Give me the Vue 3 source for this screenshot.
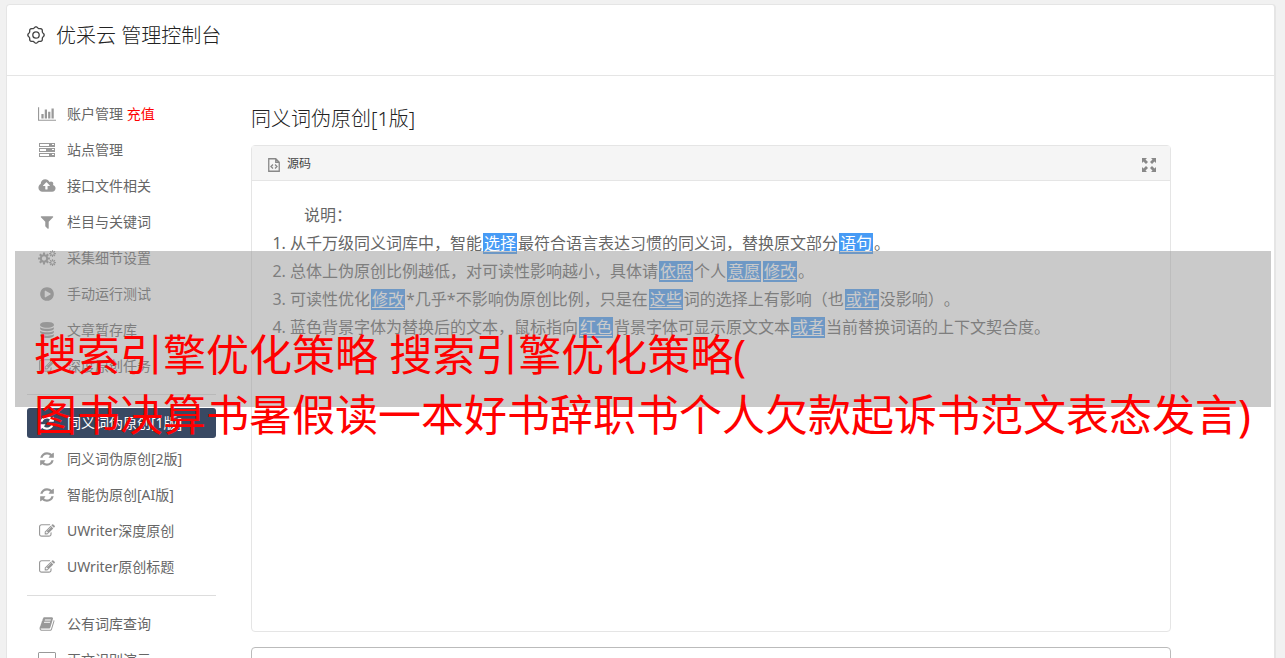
<script setup>
import { ref } from 'vue'

const icons = {
  chart: {
    box: '0 0 2048 1792',
    d: 'M640 896v512h-256v-512h256zm384-512v1024h-256v-1024h256zm1024 1152v128h-2048v-1536h128v1408h1920zm-640-896v768h-256v-768h256zm384-384v1152h-256v-1152h256z',
  },
  server: {
    box: '0 0 18 16',
    d: 'M1 1h16v4H1zM2 2v2h9V2zm12 0v1h2V2zM1 6h16v4H1zm1 1v2h6V7zm12 0v1h2V7zM1 11h16v4H1zm1 1v2h9v-2zm12 0v1h2v-1z',
  },
  upload: {
    box: '-64 0 1920 1792',
    d: 'M1216 864q0-14-9-23l-352-352q-9-9-23-9t-23 9l-351 351q-10 12-10 24 0 14 9 23t23 9h224v352q0 13 9.500 22.500t22.500 9.500h192q13 0 22.500-9.500t9.500-22.500v-352h224q13 0 22.500-9.500t9.500-22.500zm640 288q0 159-112.500 271.500t-271.500 112.500h-1088q-185 0-316.500-131.500t-131.500-316.500q0-130 70-240t188-165q-2-30-2-43 0-212 150-362t362-150q156 0 285.500 87t188.500 231q71-62 166-62 106 0 181 75t75 181q0 76-41 138 130 31 213.500 135.500t83.500 238.500z',
  },
  filter: {
    box: '0 0 1792 1792',
    d: 'M1595 295q17 41-14 70l-493 493v742q0 42-39 59-13 5-25 5-27 0-45-19l-256-256q-19-19-19-45v-486l-493-493q-31-29-14-70 17-39 59-39h1280q42 0 59 39z',
  },
  cogs: { box: '0 0 18 16', gears: [[6, 8.5, 4.2, 6], [14.5, 3.6, 2.2, 3.5], [14.5, 12.6, 2.2, 3.5]] },
  play: {
    box: '0 0 1792 1792',
    d: 'M896 128q209 0 385.500 103t279.500 279.500 103 385.500-103 385.500-279.500 279.500-385.500 103-385.500-103-279.500-279.500-103-385.500 103-385.500 279.500-279.500 385.500-103zm384 823q32-18 32-55t-32-55l-544-320q-31-19-64-1-32 19-32 56v640q0 37 32 56 16 8 32 8 17 0 32-9z',
  },
  database: {
    box: '0 0 1792 1792',
    d: 'M896 768q237 0 443-43t325-127v170q0 69-103 128t-280 93.500-385 34.500-385-34.500-280-93.500-103-128v-170q119 84 325 127t443 43zm0 768q237 0 443-43t325-127v170q0 69-103 128t-280 93.500-385 34.500-385-34.500-280-93.500-103-128v-170q119 84 325 127t443 43zm0-384q237 0 443-43t325-127v170q0 69-103 128t-280 93.500-385 34.500-385-34.500-280-93.500-103-128v-170q119 84 325 127t443 43zm0-1152q208 0 385 34.500t280 93.500 103 128v128q0 69-103 128t-280 93.500-385 34.500-385-34.500-280-93.500-103-128v-128q0-69 103-128t280-93.500 385-34.500z',
  },
  edit: {
    box: '0 0 1792 1792',
    d: 'M888 1184l116-116-152-152-116 116v56h96v96h56zm440-720q-16-16-33 1l-350 350q-17 17-1 33t33-1l350-350q17-17 1-33zm80 594v190q0 119-84.500 203.500t-203.500 84.500h-832q-119 0-203.500-84.500t-84.500-203.500v-832q0-119 84.500-203.500t203.500-84.500h832q63 0 117 25 15 7 18 23 3 17-9 29l-49 49q-14 14-32 8-23-6-45-6h-832q-66 0-113 47t-47 113v832q0 66 47 113t113 47h832q66 0 113-47t47-113v-126q0-13 9-22l64-64q15-15 35-7t20 29zm-96-738l288 288-672 672h-288v-288zm444 132l-92 92-288-288 92-92q28-28 68-28t68 28l152 152q28 28 28 68t-28 68z',
  },
  refresh: {
    box: '0 0 1792 1792',
    d: 'M1639 1056q0 5-1 7-64 268-268 434.500t-478 166.500q-146 0-282.500-55t-243.500-157l-129 129q-19 19-45 19t-45-19-19-45v-448q0-26 19-45t45-19h448q26 0 45 19t19 45-19 45l-137 137q71 66 161 102t187 36q134 0 250-65t186-179q11-17 53-117 8-23 30-23h192q13 0 22.500 9.500t9.500 22.500zm25-800v448q0 26-19 45t-45 19h-448q-26 0-45-19t-19-45 19-45l138-138q-148-137-349-137-134 0-250 65t-186 179q-11 17-53 117-8 23-30 23h-199q-13 0-22.500-9.500t-9.500-22.500v-7q65-268 270-434.500t480-166.500q146 0 284 55.500t245 156.500l130-129q19-19 45-19t45 19 19 45z',
  },
  book: {
    box: '0 0 1792 1792',
    d: 'M1703 478q40 57 18 129l-275 906q-19 64-76.500 107.500t-122.500 43.500h-923q-77 0-148.500-53.500t-99.500-131.500q-24-67-2-127 0-4 3-27t4-37q1-8-3-21.500t-3-19.500q2-11 8-21t16.500-23.500 16.500-23.500q23-38 45-91.500t30-91.500q3-10 .5-30t-.5-28q3-11 17-28t17-23q21-36 42-92t25-90q1-9-2.500-32t.5-28q4-13 22-30.500t22-22.500q19-26 42.500-84.500t27.500-96.500q1-8-3-25.500t-2-26.500q2-8 9-18t18-23 17-21q8-12 16.500-30.500t15-35 16-36 19.500-32 26.500-23.500 36-11.500 47.500 5.500l-1 3q38-9 51-9h761q74 0 114 56t18 130l-274 906q-36 119-71.500 153.500t-128.500 34.500h-869q-27 0-38 15-11 16-1 43 24 70 144 70h923q29 0 56-15.500t35-41.500l300-987q7-22 5-57 38 15 59 43zm-1064 2q-4 13 2 22.500t20 9.500h608q13 0 25.500-9.500t16.500-22.500l21-64q4-13-2-22.500t-20-9.500h-608q-13 0-25.500 9.500t-16.500 22.500zm-83 256q-4 13 2 22.500t20 9.500h608q13 0 25.500-9.500t16.500-22.500l21-64q4-13-2-22.500t-20-9.500h-608q-13 0-25.500 9.500t-16.500 22.500z',
  },
  screen: {
    box: '0 0 18 16',
    d: 'M1.500 0h15A1.500 1.500 0 0 1 18 1.500v10a1.500 1.500 0 0 1-1.500 1.500H11v2h2v1H5v-1h2v-2H1.500A1.500 1.500 0 0 1 0 11.500v-10A1.500 1.500 0 0 1 1.500 0zM1 1v10h16V1z',
  },
}

// Outline of a toothed wheel with a round hole
function gear([cx, cy, inner, outer]) {
  const teeth = 8
  const pts = []
  for (let i = 0; i < teeth; i++) {
    const a = (i * 2 * Math.PI) / teeth
    for (const [off, r] of [[-0.26, inner], [-0.17, outer], [0.17, outer], [0.26, inner]]) {
      pts.push(`${(cx + r * Math.cos(a + off)).toFixed(2)} ${(cy + r * Math.sin(a + off)).toFixed(2)}`)
    }
  }
  const h = outer * 0.36
  return `M${pts.join('L')}zM${cx - h} ${cy}a${h} ${h} 0 1 0 ${2 * h} 0a${h} ${h} 0 1 0 ${-2 * h} 0z`
}

const iconPath = (name) => icons[name].d || icons[name].gears.map(gear).join('')

// Wavy contour of the settings wheel in the title bar
const wheel = (() => {
  const pts = []
  for (let i = 0; i < 96; i++) {
    const a = (i * 2 * Math.PI) / 96
    const r = 7.6 + 0.6 * Math.cos(8 * a)
    pts.push(`${(9 + r * Math.cos(a)).toFixed(2)} ${(9 + r * Math.sin(a)).toFixed(2)}`)
  }
  return `M${pts.join('L')}z`
})()

const groups = [
  [
    { icon: 'chart', label: '账户管理', extra: '充值' },
    { icon: 'server', label: '站点管理' },
    { icon: 'upload', label: '接口文件相关' },
    { icon: 'filter', label: '栏目与关键词' },
    { icon: 'cogs', label: '采集细节设置' },
    { icon: 'play', label: '手动运行测试' },
    { icon: 'database', label: '文章暂存库' },
    { icon: 'edit', label: '深度原创任务' },
  ],
  [
    { icon: 'refresh', label: '同义词伪原创[1版]', active: true },
    { icon: 'refresh', label: '同义词伪原创[2版]' },
    { icon: 'refresh', label: '智能伪原创[AI版]' },
    { icon: 'edit', label: 'UWriter深度原创' },
    { icon: 'edit', label: 'UWriter原创标题' },
  ],
  [
    { icon: 'book', label: '公有词库查询' },
    { icon: 'screen', label: '正文识别演示' },
  ],
]

// Odd entries of each line are the replaced words
const lines = [
  ['从千万级同义词库中，智能', '选择', '最符合语言表达习惯的同义词，替换原文部分', '语句', '。'],
  ['总体上伪原创比例越低，对可读性影响越小，具体请', '依照', '个人', '意愿', '', '修改', '。'],
  ['可读性优化', '修改', '*几乎*不影响伪原创比例，只是在', '这些', '词的选择上有影响（也', '或许', '没影响）。'],
  ['蓝色背景字体为替换后的文本，鼠标指向', '红色', '背景字体可显示原文文本', '或者', '当前替换词语的上下文契合度。'],
]

const result = ref('')
</script>

<template>
  <div class="page">
    <div class="card">
      <header class="top">
        <svg class="wheel" viewBox="0 0 18 18" aria-hidden="true">
          <path :d="wheel" />
          <circle cx="9" cy="9" r="3.200" />
        </svg>
        <h1>优采云 管理控制台</h1>
      </header>
      <div class="body">
        <nav class="side">
          <ul v-for="(group, g) in groups" :key="g">
            <li v-for="item in group" :key="item.label">
              <a href="#" :class="{ active: item.active }">
                <svg class="icon" :viewBox="icons[item.icon].box" aria-hidden="true">
                  <path :d="iconPath(item.icon)" fill-rule="evenodd" />
                </svg>
                <span>{{ item.label }} <em v-if="item.extra">{{ item.extra }}</em></span>
              </a>
            </li>
          </ul>
        </nav>
        <main class="main">
          <h2>同义词伪原创[1版]</h2>
          <section class="editor">
            <div class="toolbar">
              <button type="button" class="source">
                <svg viewBox="0 0 12 14" aria-hidden="true">
                  <path d="M.75.75h7l3.500 3.500v9H.75z M7.750.750v3.500h3.500" />
                  <path d="M5 6.500L3 8.500l2 2M7 6.500l2 2-2 2" />
                </svg>
                源码
              </button>
              <button type="button" class="expand" aria-label="全屏">
                <svg viewBox="0 0 14 14" aria-hidden="true">
                  <path d="M0 0h5L3.500 1.500l2.500 2.500-2 2L1.500 3.500 0 5zM14 0v5l-1.500-1.500L10 6 8 4l2.500-2.500L9 0zM0 14V9l1.500 1.500L4 8l2 2-2.500 2.500L5 14zM14 14H9l1.500-1.500L8 10l2-2 2.500 2.500L14 9z" />
                </svg>
              </button>
            </div>
            <div class="content">
              <p>说明：</p>
              <ol>
                <li v-for="(line, i) in lines" :key="i">
                  <template v-for="(part, j) in line" :key="j"><a v-if="j % 2" href="#">{{ part }}</a><template v-else>{{ part }}</template></template>
                </li>
              </ol>
            </div>
          </section>
          <textarea v-model="result" aria-label="结果"></textarea>
        </main>
      </div>
    </div>
    <div class="banner">
      <p>搜索引擎优化策略 搜索引擎优化策略(</p>
      <p>图书决算书暑假读一本好书辞职书个人欠款起诉书范文表态发言)</p>
    </div>
  </div>
</template>

<style>
body {
  margin: 0;
  background: #f1f1f1;
}
</style>

<style scoped>
* {
  box-sizing: border-box;
}
.page {
  position: relative;
  height: 100vh;
  overflow: hidden;
  padding: 4px 9px 0 6px;
  color: #666;
  font-family: "Noto Sans", "Noto Sans CJK SC", sans-serif;
  font-size: 14px;
  text-spacing-trim: space-all;
}
h1,
h2,
p,
ul,
ol {
  margin: 0;
  padding: 0;
}
.card {
  background: #fff;
  border: 1px solid #e5e5e5;
  border-right-width: 2px;
  border-radius: 4px 4px 0 0;
}
.top {
  display: flex;
  align-items: flex-start;
  gap: 11px;
  height: 71px;
  padding: 16px 20px;
  border-bottom: 1px solid #e5e5e5;
}
.wheel {
  width: 18px;
  height: 18px;
  margin-top: 5px;
  fill: none;
  stroke: #444;
  stroke-width: 1.3;
}
h1,
h2 {
  color: #222;
  font-size: 20px;
  font-weight: 300;
  line-height: 30px;
}
.body {
  display: flex;
  gap: 35px;
  padding: 23px 103px 0 20px;
}
.side {
  flex: 0 0 189px;
}
.side ul {
  display: flex;
  flex-direction: column;
  gap: 6px;
  list-style: none;
}
.side ul + ul {
  margin-top: 13px;
  padding-top: 13px;
  border-top: 1px solid #ddd;
}
.side a {
  display: flex;
  align-items: center;
  gap: 11px;
  height: 30px;
  padding: 0 11px;
  border-radius: 3px;
  color: #666;
  line-height: 30px;
  text-decoration: none;
  white-space: nowrap;
}
.side em {
  color: #f00;
  font-style: normal;
}
.icon {
  flex: none;
  width: 18px;
  height: 16px;
  fill: #999;
}
.side a.active {
  background: #394963;
  color: #fff;
}
.active .icon {
  fill: #fff;
}
.main {
  flex: 1;
  min-width: 0;
  padding-top: 5px;
}
.editor {
  margin-top: 11px;
  min-height: 487px;
  border: 1px solid #e5e5e5;
  border-radius: 4px;
}
.toolbar {
  display: flex;
  align-items: center;
  justify-content: space-between;
  height: 35px;
  padding: 0 14px 0 16px;
  background: #f5f5f5;
  border-bottom: 1px solid #e5e5e5;
}
button {
  padding: 0;
  border: 0;
  background: none;
  color: #444;
  font: inherit;
  font-size: 12px;
}
.source {
  display: flex;
  align-items: center;
  gap: 7px;
}
.source svg {
  width: 12px;
  height: 14px;
  margin-top: 4px;
  fill: none;
  stroke: #888;
  stroke-width: 1.3;
}
.expand svg {
  display: block;
  width: 14px;
  height: 14px;
  margin-top: 4px;
  fill: #888;
}
.content {
  padding: 20px;
  font-size: 16px;
  line-height: 28px;
}
.content p {
  text-indent: 32px;
}
.content ol {
  padding-left: 18px;
}
.content a {
  display: inline-block;
  height: 21px;
  margin: 0 1px;
  padding: 0 1px;
  background: #479bf5;
  color: #fff;
  line-height: 21px;
  text-underline-offset: 2px;
}
textarea {
  display: block;
  width: 100%;
  height: 120px;
  margin-top: 15px;
  border: 1px solid #bbb;
  border-radius: 4px;
  resize: none;
}
.banner {
  position: absolute;
  top: 251px;
  left: 15px;
  right: 14px;
  height: 156px;
  padding: 74px 0 0 19px;
  background: rgba(149, 149, 149, 0.5);
  color: #f00;
  font-size: 43px;
  line-height: 60px;
  white-space: nowrap;
}
</style>
